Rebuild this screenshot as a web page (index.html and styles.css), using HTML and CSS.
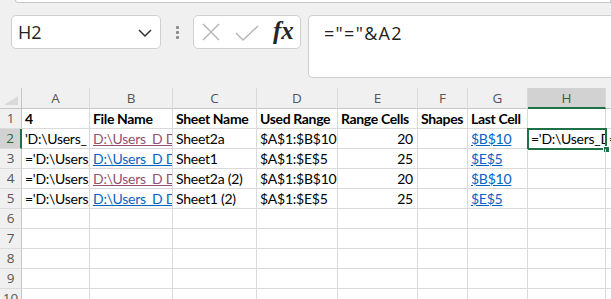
FILE: index.html
```html
<!DOCTYPE html>
<html>
<head>
<meta charset="utf-8">
<link rel="stylesheet" href="styles.css">
</head>
<body>
<div class="topstrip"><div class="topbox"></div></div>
<div class="toolbar">
  <div class="namebox">
    <span class="name">H2</span>
    <svg class="chev" width="14" height="8" viewBox="0 0 14 8"><path d="M1 1 L7 7 L13 1" fill="none" stroke="#333" stroke-width="1.5"/></svg>
  </div>
  <div class="dots"><span></span><span></span><span></span></div>
  <div class="fxbox">
    <svg class="icon-x" width="18" height="18" viewBox="0 0 18 18"><path d="M1 1 L17 17 M17 1 L1 17" stroke="#b4b4b4" stroke-width="1.4" fill="none"/></svg>
    <svg class="icon-check" width="24" height="16" viewBox="0 0 24 16"><path d="M1 8 L8 15 L23 1" stroke="#b4b4b4" stroke-width="1.4" fill="none"/></svg>
    <span class="fx">fx</span>
  </div>
  <div class="formula">="="&amp;A2</div>
</div>
<div class="sheet">
  <div class="row hdr">
    <div class="rh corner"><svg width="14" height="9" viewBox="0 0 14 9"><path d="M14 0 L14 9 L0 9 Z" fill="#d9d9d9"/></svg></div>
    <div class="ch cA">A</div><div class="ch cB">B</div><div class="ch cC">C</div><div class="ch cD">D</div><div class="ch cE">E</div><div class="ch cF">F</div><div class="ch cG">G</div><div class="ch cH sel">H</div><div class="ch cI"></div>
  </div>
  <div class="row">
    <div class="rh">1</div>
    <div class="c cA b">4</div><div class="c cB b">File Name</div><div class="c cC b">Sheet Name</div><div class="c cD b">Used Range</div><div class="c cE b">Range Cells</div><div class="c cF b">Shapes</div><div class="c cG b">Last Cell</div><div class="c cH"></div><div class="c cI"></div>
  </div>
  <div class="row">
    <div class="rh selr">2</div>
    <div class="c cA">'D:\Users_</div><div class="c cB"><span class="visited">D:\Users_D D</span></div><div class="c cC">Sheet2a</div><div class="c cD">$A$1:$B$10</div><div class="c cE num">20</div><div class="c cF"></div><div class="c cG"><span class="link">$B$10</span></div><div class="c cH">='D:\Users_D</div><div class="c cI">='D</div>
    <div class="selbox"><div class="handle"></div></div>
  </div>
  <div class="row">
    <div class="rh">3</div>
    <div class="c cA">='D:\Users_</div><div class="c cB"><span class="link">D:\Users_D D</span></div><div class="c cC">Sheet1</div><div class="c cD">$A$1:$E$5</div><div class="c cE num">25</div><div class="c cF"></div><div class="c cG"><span class="link">$E$5</span></div><div class="c cH"></div><div class="c cI"></div>
  </div>
  <div class="row">
    <div class="rh">4</div>
    <div class="c cA">='D:\Users_</div><div class="c cB"><span class="visited">D:\Users_D D</span></div><div class="c cC">Sheet2a (2)</div><div class="c cD">$A$1:$B$10</div><div class="c cE num">20</div><div class="c cF"></div><div class="c cG"><span class="link">$B$10</span></div><div class="c cH"></div><div class="c cI"></div>
  </div>
  <div class="row">
    <div class="rh">5</div>
    <div class="c cA">='D:\Users_</div><div class="c cB"><span class="link">D:\Users_D D</span></div><div class="c cC">Sheet1 (2)</div><div class="c cD">$A$1:$E$5</div><div class="c cE num">25</div><div class="c cF"></div><div class="c cG"><span class="link">$E$5</span></div><div class="c cH"></div><div class="c cI"></div>
  </div>
  <div class="row"><div class="rh">6</div><div class="c cA"></div><div class="c cB"></div><div class="c cC"></div><div class="c cD"></div><div class="c cE"></div><div class="c cF"></div><div class="c cG"></div><div class="c cH"></div><div class="c cI"></div></div>
  <div class="row"><div class="rh">7</div><div class="c cA"></div><div class="c cB"></div><div class="c cC"></div><div class="c cD"></div><div class="c cE"></div><div class="c cF"></div><div class="c cG"></div><div class="c cH"></div><div class="c cI"></div></div>
  <div class="row"><div class="rh">8</div><div class="c cA"></div><div class="c cB"></div><div class="c cC"></div><div class="c cD"></div><div class="c cE"></div><div class="c cF"></div><div class="c cG"></div><div class="c cH"></div><div class="c cI"></div></div>
  <div class="row"><div class="rh">9</div><div class="c cA"></div><div class="c cB"></div><div class="c cC"></div><div class="c cD"></div><div class="c cE"></div><div class="c cF"></div><div class="c cG"></div><div class="c cH"></div><div class="c cI"></div></div>
  <div class="row"><div class="rh">10</div><div class="c cA"></div><div class="c cB"></div><div class="c cC"></div><div class="c cD"></div><div class="c cE"></div><div class="c cF"></div><div class="c cG"></div><div class="c cH"></div><div class="c cI"></div></div>
</div>
</body>
</html>
```

FILE: styles.css
```css
* { box-sizing: border-box; }
html, body { margin: 0; padding: 0; }
body {
  width: 611px;
  height: 299px;
  overflow: hidden;
  background: #f0f0f0;
  font-family: "Open Sans", "Noto Sans", sans-serif;
}
.topstrip {
  height: 15px;
  padding-left: 15px;
}
.topbox {
  height: 3px;
  background: #fff;
  border: 1px solid #c8c8c8;
  border-top: none;
  border-radius: 0 0 0 6px;
}
.toolbar {
  display: flex;
  align-items: flex-start;
  padding-left: 11px;
  height: 73px;
}
.namebox {
  width: 150px;
  height: 34px;
  background: #fff;
  border: 1px solid #cfcfcf;
  border-radius: 5px;
  display: flex;
  align-items: center;
  justify-content: space-between;
  padding: 0 8px 0 6px;
}
.name {
  font-size: 18px;
  color: #222;
  line-height: 1;
}
.chev { margin-top: 2px; }
.dots {
  width: 32px;
  height: 34px;
  display: flex;
  flex-direction: column;
  align-items: center;
  justify-content: center;
  gap: 2px;
}
.dots span {
  width: 3px;
  height: 3px;
  background: #8a8a8a;
  border-radius: 1px;
}
.fxbox {
  width: 108px;
  height: 34px;
  background: #fff;
  border: 1px solid #cfcfcf;
  border-radius: 5px;
  display: flex;
  align-items: center;
  padding-left: 8px;
}
.icon-x { margin-right: 15px; }
.icon-check { margin-right: 14px; margin-top: 1px; }
.fx {
  font-family: "Liberation Serif", "DejaVu Serif", serif;
  font-style: italic;
  font-weight: bold;
  font-size: 25px;
  color: #262626;
  line-height: 1;
  margin-top: -4px;
}
.formula {
  margin-left: 7px;
  flex: 1;
  height: 63px;
  background: #fff;
  border: 1px solid #cfcfcf;
  border-right: none;
  border-radius: 5px 0 0 5px;
  font-size: 18px;
  letter-spacing: 1.3px;
  color: #222;
  padding: 5px 0 0 15px;
  line-height: 24px;
}
.sheet {
  background: #fff;
  font-family: "Lato", "Liberation Sans", sans-serif;
  font-size: 14px;
  letter-spacing: -0.25px;
  color: #000;
}
.row {
  display: flex;
  height: 20px;
  position: relative;
}
.row.hdr {
  height: 21px;
  background: #f0f0f0;
}
.rh {
  width: 22px;
  flex: none;
  background: #f0f0f0;
  border-right: 1px solid #c6c6c6;
  border-bottom: 1px solid #dcdcdc;
  font-family: "Open Sans", "Noto Sans", sans-serif;
  font-size: 13.5px;
  letter-spacing: 0;
  color: #555;
  text-align: center;
  line-height: 19px;
}
.rh.corner {
  border-bottom: 1px solid #c6c6c6;
  display: flex;
  align-items: flex-end;
  justify-content: center;
  padding-bottom: 3px;
}
.rh.selr {
  background: #d2d2d2;
  color: #1d6b3f;
  border-right: 2px solid #1e7145;
}
.ch {
  flex: none;
  border-right: 1px solid #dadada;
  border-bottom: 1px solid #c6c6c6;
  font-family: "Open Sans", "Noto Sans", sans-serif;
  font-size: 13.5px;
  letter-spacing: 0;
  color: #555;
  text-align: center;
  line-height: 21px;
}
.ch.sel {
  background: #d2d2d2;
  color: #1d6b3f;
  border-bottom: 2px solid #1e7145;
}
.c {
  flex: none;
  border-right: 1px solid #dadada;
  border-bottom: 1px solid #dadada;
  white-space: nowrap;
  overflow: hidden;
  padding-left: 3px;
  line-height: 19px;
}
.cA { width: 68px; }
.cB { width: 83px; }
.cC { width: 84px; }
.cD { width: 81px; }
.cE { width: 80px; }
.cF { width: 50px; }
.cG { width: 60px; }
.cH { width: 78px; }
.cI { width: 40px; }
.b { font-weight: bold; letter-spacing: -0.35px; }
.num { text-align: right; padding-right: 4px; }
.link { color: #0563c1; text-decoration: underline; }
.visited { color: #954f72; text-decoration: underline; }
.selbox {
  position: absolute;
  left: 527px;
  top: -1px;
  width: 80px;
  height: 22px;
  border: 2px solid #1e7145;
}
.handle {
  position: absolute;
  right: -5px;
  bottom: -5px;
  width: 7px;
  height: 7px;
  background: #1e7145;
  border: 1px solid #fff;
}
```
